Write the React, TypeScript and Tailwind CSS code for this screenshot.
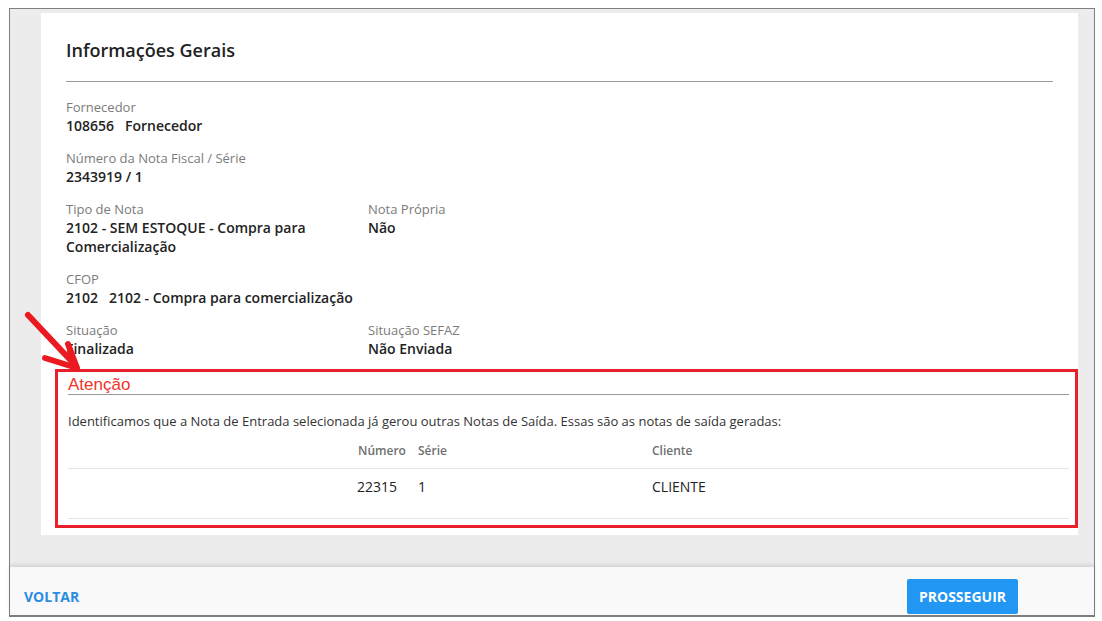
import React from "react";

const field = "flex flex-col";
const label = "text-[13px] leading-[18px] text-[#7b7b7b]";
const value = "text-[14px] leading-[19px] font-semibold text-[#222]";

function Field({ title, children }: { title: string; children: React.ReactNode }) {
  return (
    <div className={field}>
      <span className={label}>{title}</span>
      <span className={value}>{children}</span>
    </div>
  );
}

export default function App() {
  return (
    <div
      className="relative h-[621px] w-[1102px] bg-white pb-[4px] pl-[9px] pr-[7px] pt-[8px]"
      style={{ fontFamily: '"Open Sans", "Liberation Sans", sans-serif' }}
    >
      <div className="flex h-full flex-col border border-b-2 border-[#7f7f7f]">
        <main className="h-[559px] bg-[#ececec] pl-[31px] pr-[16px] pt-[4px]">
          <section className="bg-white px-[25px] pb-[7px] pt-[25px]">
            <h2 className="text-[18px] leading-[24px] font-semibold text-[#222]">Informações Gerais</h2>
            <div className="mt-[19px] border-t border-[#9a9a9a]" />

            <div className="mt-[16px] flex flex-col gap-[14px]">
              <Field title="Fornecedor">
                108656&nbsp;&nbsp; Fornecedor
              </Field>
              <Field title="Número da Nota Fiscal / Série">2343919 / 1</Field>
              <div className="grid grid-cols-[302px_302px]">
                <div className="pr-[40px]">
                  <Field title="Tipo de Nota">2102 - SEM ESTOQUE - Compra para Comercialização</Field>
                </div>
                <Field title="Nota Própria">Não</Field>
              </div>
              <Field title="CFOP">
                2102&nbsp;&nbsp; 2102 - Compra para comercialização
              </Field>
              <div className="grid grid-cols-[302px_302px]">
                <Field title="Situação">Finalizada</Field>
                <Field title="Situação SEFAZ">Não Enviada</Field>
              </div>
            </div>

            <div className="-ml-[11px] -mr-[25px] mt-[11px] border-[3px] border-[#e8202a] pb-[6px] pl-[10px] pr-[6px] pt-[3px]">
              <div
                className="border-b border-[#9a9a9a] text-[17px] leading-[19px] text-[#f0342c]"
                style={{ fontFamily: '"Liberation Sans", Arial, sans-serif' }}
              >
                Atenção
              </div>
              <p className="mt-[17px] text-[13px] leading-[18px] text-[#333]">
                Identificamos que a Nota de Entrada selecionada já gerou outras Notas de Saída. Essas são as notas de saída geradas:
              </p>
              <div className="mt-[2px] grid grid-cols-[282px_60px_234px_1fr] border-b border-[#e4e4e4] text-[12px] font-semibold text-[#6f6f6f]">
                <div className="h-[36px]" />
                <div className="px-[8px] pt-[10px] leading-[18px]">Número</div>
                <div className="px-[8px] pt-[10px] leading-[18px]">Série</div>
                <div className="px-[8px] pt-[10px] leading-[18px]">Cliente</div>
              </div>
              <div className="grid h-[50px] grid-cols-[282px_60px_234px_1fr] border-b border-[#e4e4e4] text-[14px] leading-[19px] text-[#222]">
                <div />
                <div className="px-[7px] pt-[8px]">22315</div>
                <div className="px-[8px] pt-[8px]">1</div>
                <div className="px-[8px] pt-[8px]">CLIENTE</div>
              </div>
            </div>
          </section>
        </main>

        <footer className="flex h-[48px] items-center justify-between bg-[#f9f9f9] pl-[14px] pr-[76px] pt-[10px] shadow-[0_-2px_4px_rgba(0,0,0,0.12)]">
          <button className="text-[14px] font-bold text-[#2a8ce2]">VOLTAR</button>
          <button className="h-[35px] w-[111px] rounded-[2px] bg-[#2196f3] text-[14px] font-bold text-white">
            PROSSEGUIR
          </button>
        </footer>
      </div>

      <svg
        className="pointer-events-none absolute left-0 top-0"
        width="120"
        height="400"
        viewBox="0 0 120 400"
      >
        <g stroke="#ea1a20" strokeWidth="6" strokeLinecap="round" strokeLinejoin="round" fill="none">
          <path d="M28 315 L76 366" />
          <path d="M45 358 L77 368 L68 344" />
        </g>
      </svg>
    </div>
  );
}
